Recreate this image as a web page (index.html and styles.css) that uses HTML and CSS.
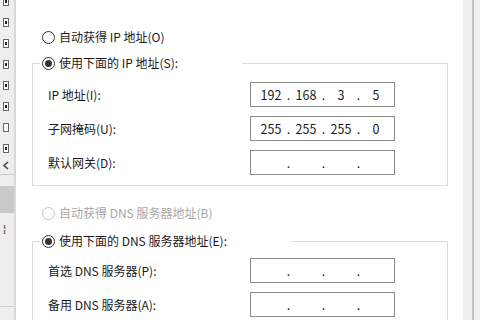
FILE: index.html
```html
<!DOCTYPE html>
<html lang="zh-CN">
<head>
	<meta charset="UTF-8">
	<title>Internet 协议版本 4 (TCP/IPv4) 属性</title>
	<link rel="stylesheet" href="styles.css">
</head>
<body>
	<div class="window">
		<div class="side">
			<span class="chk first on"></span>
			<span class="chk on"></span>
			<span class="chk on"></span>
			<span class="chk on"></span>
			<span class="chk on"></span>
			<span class="chk on"></span>
			<span class="chk"></span>
			<span class="chk on"></span>
			<svg class="caret" width="8" height="9" viewBox="0 0 8 9">
				<path d="M7 1 L3 4.5 L7 8" fill="none" stroke="#444" stroke-width="1.6"/>
			</svg>
			<div class="side-rule"></div>
			<div class="side-block"></div>
			<span class="side-glyph">⁞</span>
			<div class="side-rule low"></div>
		</div>

		<div class="panel">
			<div class="opt top">
				<span class="radio"></span>自动获得 IP 地址(O)
			</div>
			<fieldset class="group">
				<legend class="opt">
					<span class="radio on"></span>使用下面的 IP 地址(S):
				</legend>
				<div class="rows ip-rows">
					<div class="row">
						<span class="label">IP 地址(I):</span>
						<div class="ipbox">
							<span class="oct">192</span><span class="dot">.</span>
							<span class="oct">168</span><span class="dot">.</span>
							<span class="oct">3</span><span class="dot">.</span>
							<span class="oct">5</span>
						</div>
					</div>
					<div class="row">
						<span class="label">子网掩码(U):</span>
						<div class="ipbox">
							<span class="oct">255</span><span class="dot">.</span>
							<span class="oct">255</span><span class="dot">.</span>
							<span class="oct">255</span><span class="dot">.</span>
							<span class="oct">0</span>
						</div>
					</div>
					<div class="row">
						<span class="label">默认网关(D):</span>
						<div class="ipbox">
							<span class="oct"></span><span class="dot">.</span>
							<span class="oct"></span><span class="dot">.</span>
							<span class="oct"></span><span class="dot">.</span>
							<span class="oct"></span>
						</div>
					</div>
				</div>
			</fieldset>

			<div class="opt disabled">
				<span class="radio"></span>自动获得 DNS 服务器地址(B)
			</div>
			<fieldset class="group dns">
				<legend class="opt">
					<span class="radio on"></span>使用下面的 DNS 服务器地址(E):
				</legend>
				<div class="rows dns-rows">
					<div class="row">
						<span class="label">首选 DNS 服务器(P):</span>
						<div class="ipbox">
							<span class="oct"></span><span class="dot">.</span>
							<span class="oct"></span><span class="dot">.</span>
							<span class="oct"></span><span class="dot">.</span>
							<span class="oct"></span>
						</div>
					</div>
					<div class="row">
						<span class="label">备用 DNS 服务器(A):</span>
						<div class="ipbox">
							<span class="oct"></span><span class="dot">.</span>
							<span class="oct"></span><span class="dot">.</span>
							<span class="oct"></span><span class="dot">.</span>
							<span class="oct"></span>
						</div>
					</div>
				</div>
			</fieldset>
		</div>

		<div class="scroll">
			<div class="scroll-edge"></div>
		</div>
	</div>
</body>
</html>
```

FILE: styles.css
```css
body{
	margin: 0;
	font-family: "Noto Sans CJK SC", "Noto Sans", sans-serif;
	font-size: 12px;
	color: #1a1a1a;
	overflow: hidden;
}
.window{
	display: flex;
	height: 320px;
	overflow: hidden;
}

/* left strip: the list behind the dialog */
.side{
	width: 14px;
	flex: none;
	background: #eeeeee;
	border-right: 2px solid #d9d9d9;
	display: flex;
	flex-direction: column;
	overflow: hidden;
}
.chk{
	display: block;
	width: 4px;
	height: 7px;
	margin: 0 0 12px 3px;
	border: 1px solid #666;
	background: #fff;
	position: relative;
}
.chk.first{
	margin-top: -3px;
}
.chk.on::after{
	content: "";
	position: absolute;
	left: 1px;
	top: 2px;
	width: 2px;
	height: 3px;
	background: #222;
}
.caret{
	display: block;
	margin: -4px 0 0 1px;
}
.side-rule{
	height: 1px;
	background: #cfcfcf;
	margin-top: 4px;
}
.side-block{
	height: 27px;
	margin-top: 11px;
	background: #c9c9c9;
}
.side-glyph{
	display: block;
	margin: 9px 0 0 3px;
	line-height: 14px;
	font-size: 12px;
	color: #444;
}
.side-rule.low{
	margin-top: 70px;
}

/* the dialog page */
.panel{
	flex: 1;
	background: #fff;
	padding: 29px 15px 0 16px;
}
.opt{
	display: flex;
	align-items: center;
	height: 16px;
	line-height: 16px;
	padding-left: 10px;
	white-space: nowrap;
}
.radio{
	width: 11px;
	height: 11px;
	border: 1px solid #333;
	border-radius: 50%;
	margin-right: 4px;
	position: relative;
	flex: none;
}
.radio.on::after{
	content: "";
	position: absolute;
	left: 2px;
	top: 2px;
	width: 7px;
	height: 7px;
	border-radius: 50%;
	background: #333;
}
.opt.disabled{
	color: #a6a6a6;
	margin-top: 19px;
}
.opt.disabled .radio{
	border-color: #c4c4c4;
}

.group{
	margin: 10px 0 0;
	padding: 0;
	border: 1px solid #dcdcdc;
	min-width: 0;
}
.group.dns{
	margin-top: 12px;
}
.group legend{
	margin-left: 7px;
	padding: 0 64px 0 2px;
	background: #fff;
}
.rows{
	display: flex;
	flex-direction: column;
	gap: 9px;
	padding: 11px 0 10px 15px;
}
.dns-rows{
	padding-top: 9px;
}
.row{
	display: flex;
	align-items: center;
	height: 25px;
}
.label{
	width: 202px;
	flex: none;
}
.ipbox{
	width: 145px;
	height: 25px;
	box-sizing: border-box;
	border: 1px solid #8a8a8a;
	display: flex;
	padding-left: 5px;
	line-height: 23px;
	font-size: 12.5px;
}
.oct{
	width: 30px;
	text-align: center;
}
.dot{
	width: 5px;
	text-align: center;
}

/* right strip */
.scroll{
	width: 8px;
	flex: none;
	background: #eeeeee;
	padding-left: 9px;
}
.scroll-edge{
	height: 100%;
	border-left: 2px solid #c2c2c2;
	background: #f0f0f0;
}
```
